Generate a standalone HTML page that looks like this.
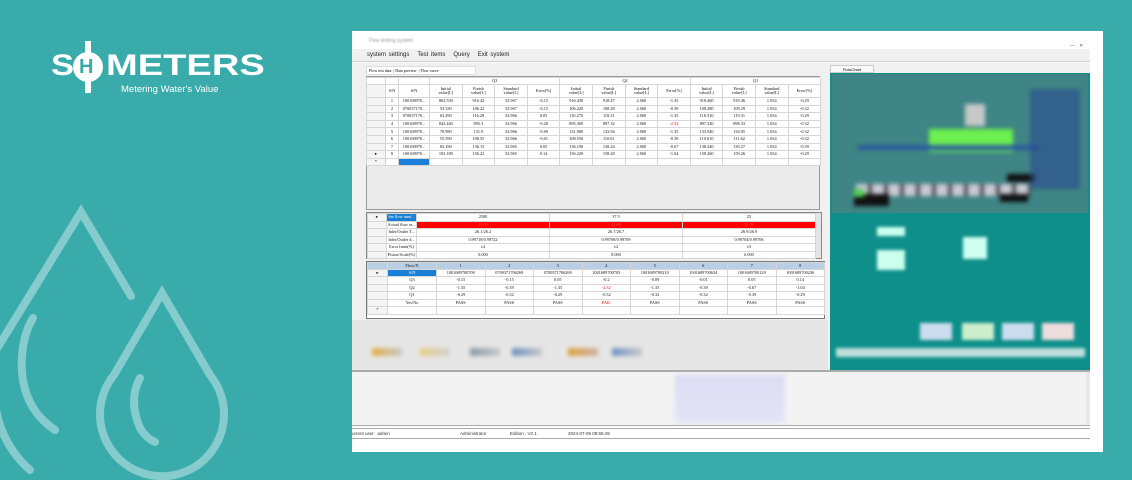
<!DOCTYPE html>
<html><head><meta charset="utf-8"><style>
*{margin:0;padding:0;box-sizing:border-box}
body{width:1132px;height:480px;background:#3aabab;position:relative;overflow:hidden;font-family:"Liberation Sans",sans-serif}
.a{position:absolute}
table{border-collapse:collapse;table-layout:fixed;position:absolute;background:#fff}
td{border:1px solid #d6d6d6;font-size:4.3px;line-height:4px;text-align:center;padding:0;overflow:hidden;white-space:nowrap;color:#111;font-family:"Liberation Serif",serif}
.h td{background:#fff}
.rh{background:#f4f4f4}
.r{color:#e00}
.sel{background:#1a7fd6;color:#fff}
.hb td{background:#b9cfe6}
.red td.v{background:#f00;color:#f55}
</style></head><body>
<svg class="a" style="left:0;top:0" width="350" height="480" viewBox="0 0 350 480" fill="none" stroke="#86cccc" stroke-width="8" stroke-linecap="round">
<path d="M-10 360 L81 212 L131 296"/>
<path d="M-5 380 A105 105 0 0 0 30 470"/>
<path d="M33 318 Q20 340 22 372 Q25 410 55 430" />
<path d="M162 293 L210 375 A62 62 0 1 1 114 375 Z"/>
<path d="M140 378 Q128 400 140 428 Q146 438 155 442"/>
</svg>
<div class="a" style="left:51px;top:48px;color:#fff;font-weight:bold;font-size:30px;line-height:36px;transform:scaleX(1.15);transform-origin:left">S</div>
<div class="a" style="left:73px;top:52px;width:30px;height:30px;border-radius:50%;background:#fff"></div>
<div class="a" style="left:85px;top:41px;width:6px;height:52px;background:#fff"></div>
<div class="a" style="left:79px;top:57px;color:#3aabab;font-weight:bold;font-size:20px;line-height:20px">H</div>
<div class="a" style="left:106px;top:48px;color:#fff;font-weight:bold;font-size:30px;line-height:36px;letter-spacing:0px;transform:scaleX(1.27);transform-origin:left">METERS</div>
<div class="a" style="left:121px;top:84px;color:#fff;font-size:9.5px">Metering Water's Value</div>

<div class="a" style="left:352px;top:31px;width:751px;height:421px;background:#fff"></div>
<div class="a" style="left:366px;top:38px;font-size:5px;color:#999;filter:blur(0.5px)">· Flow testing system</div>
<div class="a" style="left:1070px;top:43px;font-size:5px;color:#666">—&nbsp;&nbsp;&nbsp;✕</div>
<div class="a" style="left:352px;top:49px;width:738px;height:13px;background:#f0f0f0;border-bottom:1px solid #ccc"></div>
<div class="a" style="left:367px;top:52px;font-size:6px;color:#222;word-spacing:1px">system settings&nbsp;&nbsp;&nbsp;Test items&nbsp;&nbsp;&nbsp;Query&nbsp;&nbsp;&nbsp;Exit system</div>
<div class="a" style="left:352px;top:63px;width:738px;height:307px;background:#f0f0f0"></div>
<div class="a" style="left:366px;top:66px;width:110px;height:9px;font-size:4px;font-family:'Liberation Serif',serif;background:#fff;border:1px solid #ddd;line-height:8px;padding-left:2px">Flow test data&nbsp;&nbsp;| Data preview&nbsp;&nbsp;| Flow curve</div>
<div class="a" style="left:366px;top:76px;width:454px;height:134px;background:#ebebeb;border:1px solid #999"></div>

<table style="left:366px;top:77px;width:454px">
<colgroup><col style="width:19px"><col style="width:13px"><col style="width:31px"><col span="12" style="width:32.6px"></colgroup>
<tr style="height:7px" class="h"><td class="rh"></td><td class="rh"></td><td class="rh"></td><td colspan="4">Q3</td><td colspan="4">Q2</td><td colspan="4">Q1</td></tr>
<tr style="height:13px"><td class="rh"></td><td>S/N</td><td>S/N</td><td>Initial<br>value[L]</td><td>Finish<br>value[L]</td><td>Standard<br>value[L]</td><td>Error[%]</td><td>Initial<br>value[L]</td><td>Finish<br>value[L]</td><td>Standard<br>value[L]</td><td>Error[%]</td><td>Initial<br>value[L]</td><td>Finish<br>value[L]</td><td>Standard<br>value[L]</td><td>Error[%]</td></tr>
<tr style="height:7.6px"><td class="rh"></td><td>1</td><td>100168970...</td><td>863.530</td><td>916.42</td><td>52.967</td><td>-0.15</td><td>916.430</td><td>918.47</td><td>2.060</td><td>-1.35</td><td>918.460</td><td>919.46</td><td>1.034</td><td>-0.29</td></tr>
<tr style="height:7.6px"><td class="rh"></td><td>2</td><td>070037170...</td><td>53.330</td><td>106.22</td><td>52.967</td><td>-0.15</td><td>106.220</td><td>108.28</td><td>2.060</td><td>-0.39</td><td>108.280</td><td>109.29</td><td>1.034</td><td>-0.32</td></tr>
<tr style="height:7.6px"><td class="rh"></td><td>3</td><td>070037170...</td><td>63.290</td><td>116.28</td><td>52.966</td><td>0.05</td><td>116.270</td><td>118.31</td><td>2.060</td><td>-1.35</td><td>118.310</td><td>119.31</td><td>1.034</td><td>-0.29</td></tr>
<tr style="height:7.6px"><td class="rh"></td><td>4</td><td>100168970...</td><td>842.440</td><td>895.3</td><td>52.966</td><td>-0.20</td><td>895.300</td><td>897.32</td><td>2.060</td><td class="r">-2.32</td><td>897.320</td><td>898.33</td><td>1.034</td><td>-0.32</td></tr>
<tr style="height:7.6px"><td class="rh"></td><td>5</td><td>100168970...</td><td>78.980</td><td>131.9</td><td>52.966</td><td>-0.09</td><td>131.900</td><td>133.94</td><td>2.060</td><td>-1.35</td><td>133.940</td><td>134.95</td><td>1.034</td><td>-0.32</td></tr>
<tr style="height:7.6px"><td class="rh"></td><td>6</td><td>100168970...</td><td>55.590</td><td>108.55</td><td>52.966</td><td>-0.01</td><td>108.550</td><td>110.61</td><td>2.060</td><td>-0.39</td><td>110.610</td><td>111.62</td><td>1.034</td><td>-0.32</td></tr>
<tr style="height:7.6px"><td class="rh"></td><td>7</td><td>100168970...</td><td>83.190</td><td>136.15</td><td>52.965</td><td>0.05</td><td>136.190</td><td>138.24</td><td>2.060</td><td>-0.67</td><td>138.240</td><td>139.27</td><td>1.034</td><td>-0.39</td></tr>
<tr style="height:7.6px"><td class="rh">▸</td><td>8</td><td>100168970...</td><td>103.180</td><td>156.22</td><td>52.965</td><td>0.14</td><td>156.220</td><td>158.28</td><td>2.060</td><td>-1.04</td><td>158.260</td><td>159.26</td><td>1.034</td><td>-0.29</td></tr>
<tr style="height:7.6px"><td class="rh">*</td><td></td><td class="sel"></td><td></td><td></td><td></td><td></td><td></td><td></td><td></td><td></td><td></td><td></td><td></td><td></td></tr>
</table>

<div class="a" style="left:366px;top:212px;width:456px;height:47px;background:#fff;border:1px solid #888"></div>
<div class="a" style="left:815px;top:213px;width:6px;height:45px;background:#e4e4e4"></div>
<table style="left:367px;top:213px;width:448px">
<colgroup><col style="width:19px"><col style="width:30px"><col span="3" style="width:133px"></colgroup>
<tr style="height:7.5px"><td class="rh">▸</td><td class="sel">Set flow rate(...</td><td>2500</td><td>37.5</td><td>25</td></tr>
<tr style="height:7.5px" class="red"><td class="rh"></td><td>Actual flow ra...</td><td class="v">25.00</td><td class="v">12.00</td><td class="v">12.00</td></tr>
<tr style="height:7.5px"><td class="rh"></td><td>Inlet/Outlet T...</td><td>26.1/26.2</td><td>26.7/26.7</td><td>26.9/26.9</td></tr>
<tr style="height:7.5px"><td class="rh"></td><td>Inlet/Outlet d...</td><td>0.99718/0.99722</td><td>0.99708/0.99709</td><td>0.99704/0.99706</td></tr>
<tr style="height:7.5px"><td class="rh"></td><td>Error limit(%)</td><td>±2</td><td>±2</td><td>±5</td></tr>
<tr style="height:7.5px"><td class="rh"></td><td>Piston/Scale(%)</td><td>0.000</td><td>0.000</td><td>0.000</td></tr>
</table>

<div class="a" style="left:366px;top:261px;width:459px;height:58px;background:#fff;border:1px solid #777"></div>
<table style="left:367px;top:262px;width:457px">
<colgroup><col style="width:20px"><col style="width:49px"><col span="8" style="width:48.5px"></colgroup>
<tr style="height:6.5px" class="hb"><td></td><td>Flow/N</td><td>1</td><td>2</td><td>3</td><td>4</td><td>5</td><td>6</td><td>7</td><td>8</td></tr>
<tr style="height:7.5px"><td class="rh">▸</td><td class="sel">S/N</td><td>1001689700700</td><td>0700371706269</td><td>0700371706269</td><td>1001689700703</td><td>1001689700210</td><td>1001689700634</td><td>1001689700129</td><td>1001689700236</td></tr>
<tr style="height:7.5px"><td class="rh"></td><td>Q3</td><td>-0.15</td><td>-0.15</td><td>0.05</td><td>-0.2</td><td>-0.09</td><td>-0.01</td><td>0.05</td><td>0.14</td></tr>
<tr style="height:7.5px"><td class="rh"></td><td>Q2</td><td>-1.35</td><td>-0.39</td><td>-1.35</td><td class="r">-2.32</td><td>-1.35</td><td>-0.39</td><td>-0.67</td><td>-1.04</td></tr>
<tr style="height:7.5px"><td class="rh"></td><td>Q1</td><td>-0.29</td><td>-0.32</td><td>-0.29</td><td>-0.32</td><td>-0.32</td><td>-0.32</td><td>-0.39</td><td>-0.29</td></tr>
<tr style="height:7.5px"><td class="rh"></td><td>Yes/No</td><td>PASS</td><td>PASS</td><td>PASS</td><td class="r">FAIL</td><td>PASS</td><td>PASS</td><td>PASS</td><td>PASS</td></tr>
<tr style="height:7.5px"><td class="rh">*</td><td></td><td></td><td></td><td></td><td></td><td></td><td></td><td></td><td></td></tr>
</table>

<div class="a" style="left:352px;top:320px;width:476px;height:50px;background:#e6e6e6"></div>
<div class="a" style="left:372px;top:348px;filter:blur(2px)">
<div class="a" style="left:0;top:0;width:30px;height:8px;background:linear-gradient(90deg,#e0b040,#c8c8c8)"></div>
<div class="a" style="left:48px;top:0;width:30px;height:8px;background:linear-gradient(90deg,#e8d080,#d0d0d0)"></div>
<div class="a" style="left:98px;top:0;width:30px;height:8px;background:linear-gradient(90deg,#8a9aa8,#c8c8c8)"></div>
<div class="a" style="left:140px;top:0;width:30px;height:8px;background:linear-gradient(90deg,#6a90c0,#c8c8c8)"></div>
<div class="a" style="left:196px;top:0;width:30px;height:8px;background:linear-gradient(90deg,#e0a040,#d0b0a0)"></div>
<div class="a" style="left:240px;top:0;width:30px;height:8px;background:linear-gradient(90deg,#7090c0,#c8c8c8)"></div>
</div>
<div class="a" style="left:352px;top:370px;width:738px;height:2px;background:#aaa"></div>
<div class="a" style="left:352px;top:372px;width:738px;height:53px;background:#f3f3f3"></div>
<div class="a" style="left:675px;top:375px;width:110px;height:48px;filter:blur(2px);background:linear-gradient(#dcdcf4,#e4e4f6)"></div>
<div class="a" style="left:1086px;top:372px;width:4px;height:53px;background:#e8e8e8"></div>
<div class="a" style="left:352px;top:425px;width:738px;height:4px;border-top:1px solid #aaa;border-bottom:1px solid #aaa"></div>
<div class="a" style="left:352px;top:430px;width:738px;height:8px;font-size:4.5px;color:#333;line-height:8px">
<span class="a" style="left:0">urrent user:&nbsp;&nbsp;admin</span><span class="a" style="left:108px">Administrator</span><span class="a" style="left:158px">Edition&nbsp;:&nbsp;V2.1</span><span class="a" style="left:216px">2024-07-05 09:55:49</span></div>
<div class="a" style="left:352px;top:438px;width:738px;height:1px;background:#aaa"></div>

<div class="a" style="left:830px;top:65px;width:44px;height:8px;background:#f8f8f8;border:1px solid #ccc;font-size:4px;text-align:center;line-height:7px">FlowChart</div>
<div class="a" style="left:830px;top:73px;width:260px;height:297px;background:#0f8f8a"></div>
<div class="a" style="left:832px;top:74px;width:256px;height:139px;background:#3f8585"></div>
<div class="a" style="left:832px;top:74px;width:256px;height:139px;filter:blur(2px)">
<div class="a" style="left:97px;top:55px;width:84px;height:23px;background:#6df050"></div>
<div class="a" style="left:133px;top:30px;width:20px;height:22px;background:#c8c8c8"></div>
<div class="a" style="left:26px;top:71px;width:180px;height:5px;background:#2a5aa0"></div>
<div class="a" style="left:24px;top:110px;width:175px;height:12px;background:repeating-linear-gradient(90deg,#c8c8d0 0 12px,#505058 12px 16px)"></div>
<div class="a" style="left:22px;top:120px;width:35px;height:12px;background:#111"></div>
<div class="a" style="left:168px;top:120px;width:28px;height:8px;background:#111"></div>
<div class="a" style="left:175px;top:100px;width:28px;height:8px;background:#111"></div>
<div class="a" style="left:198px;top:15px;width:50px;height:100px;background:#2a4a90;opacity:.6"></div>
<div class="a" style="left:22px;top:115px;width:10px;height:8px;background:#5c5"></div>
</div>
<div class="a" style="left:830px;top:213px;width:260px;height:157px;filter:blur(1.5px)">
<div class="a" style="left:47px;top:14px;width:28px;height:9px;background:#cfe"></div>
<div class="a" style="left:47px;top:37px;width:28px;height:20px;background:#cfe"></div>
<div class="a" style="left:133px;top:24px;width:24px;height:22px;background:#cfe"></div>
<div class="a" style="left:90px;top:110px;width:32px;height:17px;background:#cde"></div>
<div class="a" style="left:132px;top:110px;width:32px;height:17px;background:#cec"></div>
<div class="a" style="left:172px;top:110px;width:32px;height:17px;background:#cde"></div>
<div class="a" style="left:212px;top:110px;width:32px;height:17px;background:#edd"></div>
<div class="a" style="left:6px;top:135px;width:249px;height:9px;background:#c0dfdc"></div>
</div>
</body></html>
